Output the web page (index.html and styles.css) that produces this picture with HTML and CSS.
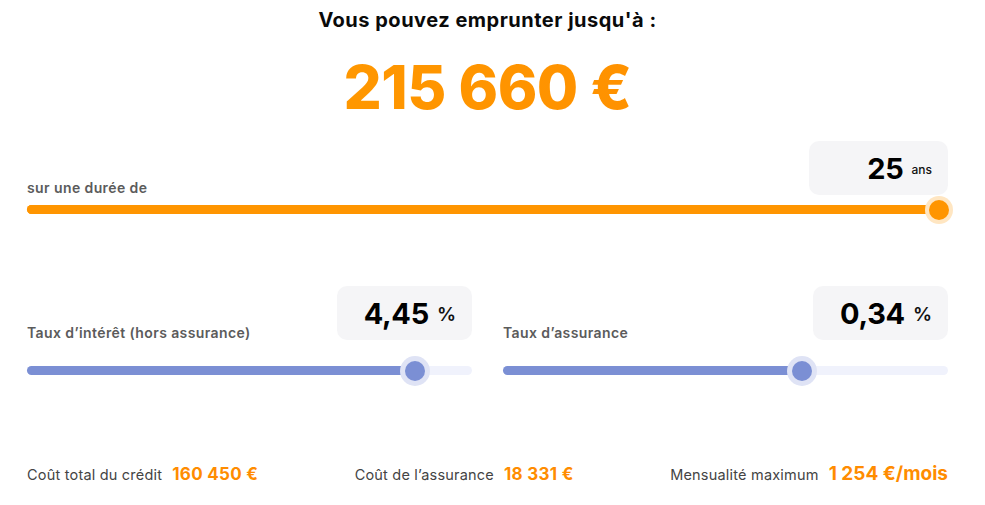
FILE: index.html
```html
<!DOCTYPE html>
<html lang="fr">
<head>
<meta charset="utf-8">
<link rel="stylesheet" href="styles.css">
</head>
<body>
<div class="sim">
  <h1 class="title">Vous pouvez emprunter jusqu'à :</h1>
  <div class="amount">215 660 €</div>

  <div class="field">
    <div class="field-head">
      <span class="label">sur une durée de</span>
      <div class="valbox"><span class="num">25</span><span class="unit">ans</span></div>
    </div>
    <div class="track orange"><div class="fill" style="width:99%"></div><div class="thumb" style="left:99%"></div></div>
  </div>

  <div class="pair">
    <div class="field">
      <div class="field-head">
        <span class="label">Taux d’intérêt (hors assurance)</span>
        <div class="valbox small"><span class="num">4,45</span><span class="unit pct">%</span></div>
      </div>
      <div class="track blue"><div class="fill" style="width:87.2%"></div><div class="thumb" style="left:87.2%"></div></div>
    </div>
    <div class="field">
      <div class="field-head">
        <span class="label">Taux d’assurance</span>
        <div class="valbox small"><span class="num">0,34</span><span class="unit pct">%</span></div>
      </div>
      <div class="track blue"><div class="fill" style="width:67.1%"></div><div class="thumb" style="left:67.1%"></div></div>
    </div>
  </div>

  <div class="stats">
    <div class="stat"><span class="stat-label">Coût total du crédit</span><span class="stat-val">160 450 €</span></div>
    <div class="stat"><span class="stat-label">Coût de l’assurance</span><span class="stat-val">18 331 €</span></div>
    <div class="stat"><span class="stat-label">Mensualité maximum</span><span class="stat-val big">1 254 €/mois</span></div>
  </div>
</div>
</body>
</html>
```

FILE: styles.css
```css
* { box-sizing: border-box; }
html, body { margin: 0; padding: 0; background: #fff; }
body { font-family: "Inter", "Noto Sans", sans-serif; color: #111; }

.sim {
  width: 921px;
  margin-left: 27px;
  padding-top: 7px;
}

.title {
  margin: 0;
  text-align: center;
  font-size: 20px;
  font-weight: 700;
  line-height: 26px;
  color: #0a0a0a;
  letter-spacing: 0.5px;
}

.amount {
  margin-top: 21px;
  text-align: center;
  font-size: 60px;
  font-weight: 800;
  line-height: 66px;
  letter-spacing: -0.5px;
  background: linear-gradient(90deg, #ff9d00 0%, #ff8c00 100%);
  -webkit-background-clip: text;
  background-clip: text;
  color: transparent;
}

.field { display: flex; flex-direction: column; }

.sim > .field { margin-top: 21px; }

.field-head {
  display: flex;
  justify-content: space-between;
  align-items: flex-end;
}

.label {
  font-size: 14px;
  font-weight: 600;
  color: #5b5b5b;
  letter-spacing: 0.4px;
  margin-bottom: -1px;
}

.valbox {
  width: 139px;
  height: 54px;
  background: #f5f5f7;
  border-radius: 10px;
  display: flex;
  align-items: center;
  justify-content: flex-end;
  padding-right: 16px;
  gap: 8px;
}
.valbox.small { width: 135px; }

.num {
  font-family: "Inter", "Roboto", sans-serif;
  font-weight: 700;
  font-size: 29px;
  color: #000;
  letter-spacing: -0.3px;
}
.unit {
  font-size: 12px;
  font-weight: 500;
  color: #111;
  margin-top: 3px;
}
.unit.pct {
  font-size: 19px;
  font-weight: 600;
  margin-top: 2px;
}

.track {
  position: relative;
  height: 9px;
  border-radius: 5px;
  margin-top: 10px;
}
.track .fill { height: 100%; border-radius: 5px; }
.track .thumb {
  position: absolute;
  top: 50%;
  width: 20px;
  height: 20px;
  border-radius: 50%;
  transform: translate(-50%, -50%);
}

.track.orange { background: #ff9500; }
.track.orange .fill { background: #ff9500; }
.track.orange .thumb { background: #ff9500; box-shadow: 0 0 0 4px #ffe6c2; }

.track.blue { background: #f0f2fc; margin-top: 26px; }
.track.blue .fill { background: #7b8fd4; }
.track.blue .thumb { background: #7b8fd4; box-shadow: 0 0 0 5px #dfe3f5; }

.pair {
  display: grid;
  grid-template-columns: 1fr 1fr;
  gap: 31px;
  margin-top: 72px;
}

.stats {
  margin-top: 87px;
  display: flex;
  justify-content: space-between;
  align-items: baseline;
}
.stat { display: flex; align-items: baseline; gap: 10px; }
.stat-label { font-size: 14.5px; color: #444; letter-spacing: 0.2px; }
.stat-val { font-size: 17px; font-weight: 700; color: #ff8c00; letter-spacing: 0.3px; }
.stat-val.big { font-size: 19px; letter-spacing: 0; }
```
